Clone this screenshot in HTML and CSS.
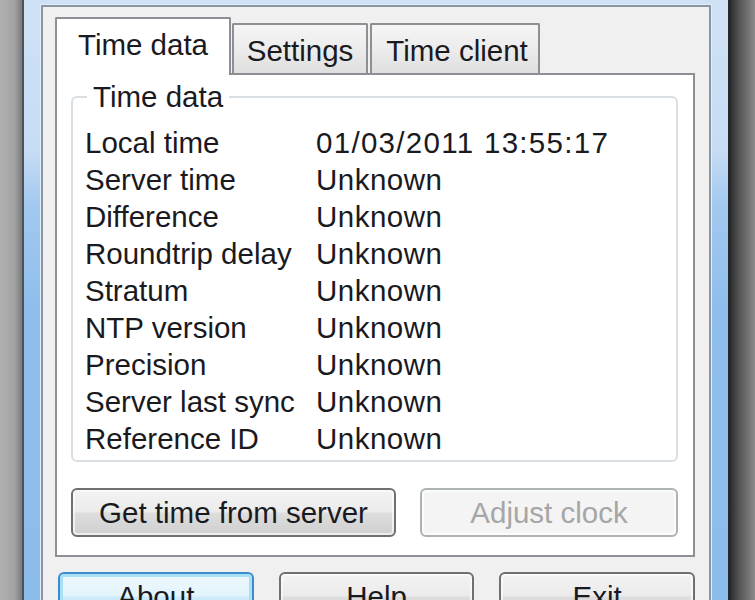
FILE: index.html
```html
<!DOCTYPE html>
<html>
<head>
<meta charset="utf-8">
<title>Time data</title>
<link rel="stylesheet" href="styles.css">
</head>
<body>
<div class="screen">
  <div class="desk desk-left"></div>
  <div class="frame">
    <div class="client">
      <div class="tabs">
        <div class="tab tab-active tab-time">Time data</div>
        <div class="tab tab-settings">Settings</div>
        <div class="tab tab-client">Time client</div>
      </div>
      <div class="panel">
        <fieldset class="group">
          <legend>Time data</legend>
          <div class="rows">
            <div>Local time</div><div class="value date">01/03/2011 13:55:17</div>
            <div>Server time</div><div class="value">Unknown</div>
            <div>Difference</div><div class="value">Unknown</div>
            <div>Roundtrip delay</div><div class="value">Unknown</div>
            <div>Stratum</div><div class="value">Unknown</div>
            <div>NTP version</div><div class="value">Unknown</div>
            <div>Precision</div><div class="value">Unknown</div>
            <div>Server last sync</div><div class="value">Unknown</div>
            <div>Reference ID</div><div class="value">Unknown</div>
          </div>
        </fieldset>
        <div class="actions">
          <button class="btn btn-get">Get time from server</button>
          <button class="btn btn-adjust" disabled>Adjust clock</button>
        </div>
      </div>
      <div class="footer">
        <button class="btn btn-foot btn-default">About</button>
        <button class="btn btn-foot">Help</button>
        <button class="btn btn-foot">Exit</button>
      </div>
    </div>
  </div>
  <div class="desk desk-right"></div>
</div>
</body>
</html>
```

FILE: styles.css
```css
html, body {
  margin: 0;
  padding: 0;
}

body {
  width: 755px;
  height: 600px;
  overflow: hidden;
  font-family: "Liberation Sans", Arial, sans-serif;
  font-size: 29.5px;
  color: #1a1a1e;
}

.screen {
  display: flex;
  width: 755px;
  height: 600px;
  overflow: hidden;
}

.desk {
  flex: none;
}

.desk-left {
  width: 22px;
  background: linear-gradient(to right, #b0b0b0, #a3a3a3 65%, #7c7c7c);
}

.desk-right {
  width: 24px;
  background: linear-gradient(to right, #2f2f2f, #555555 35%, #8a8a8a);
}

.frame {
  flex: none;
  width: 709px;
  height: 680px;
  box-sizing: border-box;
  border-left: 2px solid #4d535a;
  border-right: 3px solid #26292c;
  padding: 5px 17px 0;
  background: linear-gradient(to bottom, #cfe1f5 0, #c7ddf4 22%, #a3c9ef 30%, #8fbeec 45%, #8cbcea 100%);
}

.client {
  height: 700px;
  border: 2px solid #8a96a3;
  border-bottom: none;
  background: #f0f0f0;
  box-shadow: 0 0 0 1px #e2eefa;
  padding: 10px 14px 0 12px;
}

.tabs {
  display: flex;
  align-items: flex-end;
  height: 56px;
}

.tab {
  box-sizing: border-box;
  height: 50px;
  border: 2px solid #8d8f94;
  border-bottom: none;
  border-radius: 2px 2px 0 0;
  background: linear-gradient(to bottom, #f5f5f5, #ececec 50%, #dfdfdf);
  text-align: center;
  padding-top: 7px;
  line-height: 37px;
  white-space: nowrap;
}

.tab-active {
  height: 58px;
  background: #ffffff;
  margin-bottom: -2px;
  position: relative;
  z-index: 1;
}

.tab-time {
  width: 176px;
}

.tab-settings {
  width: 136px;
  margin-left: 1px;
}

.tab-client {
  width: 170px;
  margin-left: 2px;
  padding-left: 4px;
}

.panel {
  box-sizing: border-box;
  border: 2px solid #8d8f94;
  background: #ffffff;
  padding: 7px 15px 18px 14px;
}

.group {
  margin: 0;
  padding: 12px 12px 3px;
  border: 2px solid #d9e0e5;
  border-radius: 6px;
  min-inline-size: 0;
}

.group legend {
  padding: 0 6px;
  margin-left: 2px;
  line-height: 30px;
}

.rows {
  display: grid;
  grid-template-columns: 231px 1fr;
  line-height: 37px;
  white-space: nowrap;
}

.value {
  letter-spacing: 0.5px;
}

.date {
  letter-spacing: 1.3px;
}

.actions {
  display: flex;
  gap: 24px;
  margin-top: 26px;
}

.btn {
  box-sizing: border-box;
  height: 49px;
  margin: 0;
  padding: 0;
  border: 2px solid #707070;
  border-radius: 6px;
  background: linear-gradient(to bottom, #f3f3f3 0%, #ebebeb 48%, #dddddd 52%, #cfcfcf 100%);
  box-shadow: inset 0 0 0 2px rgba(252, 252, 252, 0.7);
  font: inherit;
  color: inherit;
  line-height: 45px;
  text-align: center;
  white-space: nowrap;
}

.btn-get {
  width: 325px;
}

.btn-adjust {
  width: 258px;
  border-color: #adb2b5;
  background: #f4f4f4;
  box-shadow: inset 0 0 0 2px #fbfbfb;
  color: #a6a6a6;
}

.footer {
  display: flex;
  gap: 25px;
  margin-top: 15px;
  margin-left: 3px;
}

.btn-foot {
  width: 196px;
  line-height: 41px;
}

.btn-default {
  border-color: #3c8ccb;
  background: linear-gradient(to bottom, #eef8fd 0%, #e3f4fc 48%, #cdebfb 52%, #b7e0f7 100%);
  box-shadow: inset 0 0 0 3px #a8e0f8;
}
```
